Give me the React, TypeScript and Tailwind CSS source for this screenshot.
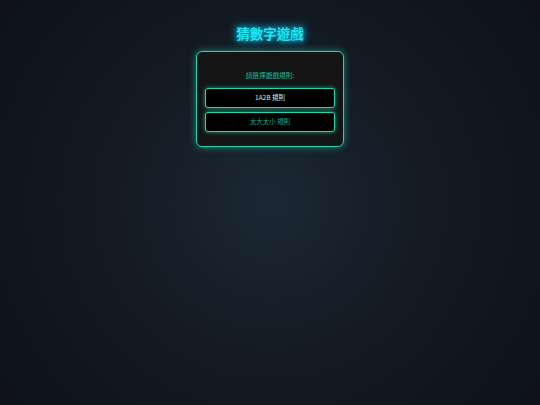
import React from "react";

export default function App() {
  const font = { fontFamily: '"Noto Sans CJK TC", "Noto Sans", sans-serif' };
  return (
    <div
      className="w-full min-h-screen h-[405px] flex flex-col items-center bg-[radial-gradient(circle_at_50%_50%,#1b2834_0%,#141b24_45%,#0e1218_100%)]"
      style={font}
    >
      <h1 className="mt-[23px] text-[13.5px] leading-[20px] font-bold text-[#1ee6f0] [text-shadow:0_0_6px_#00d0ff,0_0_12px_rgba(0,200,255,0.6)]">
        猜數字遊戲
      </h1>
      <div className="mt-[8px] w-[148px] rounded-[6px] border border-[#22d3b0] bg-[#151515] shadow-[0_0_7px_rgba(34,211,176,0.6)] px-[8px] pt-[18px] pb-[14px] flex flex-col">
        <p className="text-center text-[6.7px] leading-[10px] text-[#1fb896]">請選擇遊戲規則:</p>
        <div className="mt-[8px] flex flex-col gap-[4px]">
          <button className="h-[20px] w-full rounded-[3px] border-[1.5px] border-[#20d6b0] bg-black text-[6.5px] text-[#c2f5e6] shadow-[0_0_4px_rgba(32,214,176,0.7)]" style={font}>
            1A2B 規則
          </button>
          <button className="h-[20px] w-full rounded-[3px] border-[1.5px] border-[#20d6b0] bg-black text-[6.5px] text-[#1aa88a] shadow-[0_0_4px_rgba(32,214,176,0.7)]" style={font}>
            太大太小 規則
          </button>
        </div>
      </div>
    </div>
  );
}
